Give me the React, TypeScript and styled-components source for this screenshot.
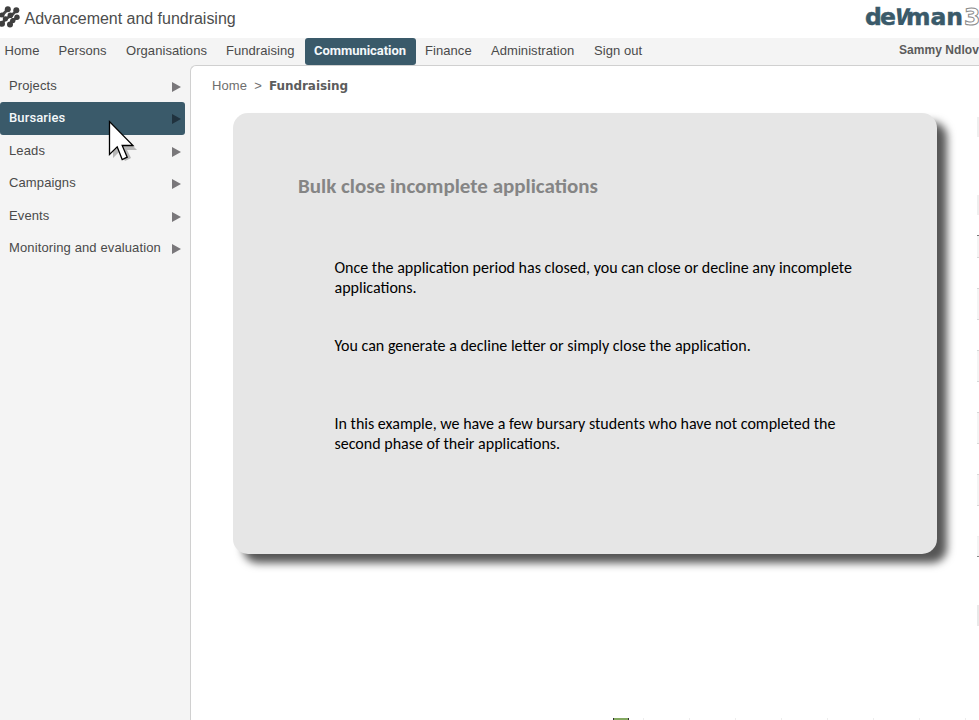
import React from "react";
import styled, { createGlobalStyle } from "styled-components";

const Global = createGlobalStyle`
  * { box-sizing: border-box; }
  html, body { margin: 0; height: 100%; overflow: hidden; background: #fff; }
`;

const TEAL = "#3a5a6a";

const Page = styled.div`
  display: flex;
  flex-direction: column;
  width: 979px;
  height: 720px;
  overflow: hidden;
  background: #f4f4f4;
  font-family: "Liberation Sans", Arial, sans-serif;
  font-size: 13px;
  color: #4a4a4a;
`;

const Header = styled.header`
  display: flex;
  align-items: flex-start;
  justify-content: space-between;
  flex: none;
  height: 38px;
  background: #fff;
`;

const Heading = styled.div`
  display: flex;
  align-items: flex-start;
`;

const Mark = styled.svg`
  flex: none;
  width: 20px;
  height: 22px;
  margin: 6px 4.5px 0 0;
`;

const Title = styled.h1`
  margin: 9px 0 0;
  font-size: 16px;
  line-height: 19px;
  font-weight: 400;
  letter-spacing: -0.02px;
  color: #4d4d4d;
`;

const Brand = styled.div`
  display: flex;
  align-items: baseline;
  width: 114px;
  padding-top: 2px;
  overflow: hidden;
  white-space: nowrap;
  font-family: "DejaVu Sans", Verdana, sans-serif;
  font-weight: 700;
  font-size: 23.5px;
  line-height: 28px;
  color: ${TEAL};
`;

const BrandPart = styled.span<{ $spacing: number }>`
  letter-spacing: ${(p) => p.$spacing}px;
  -webkit-text-stroke: 0.5px ${TEAL};
`;

const BrandSlant = styled.span`
  width: 12px;
  font-family: "Open Sans", "Noto Sans", sans-serif;
  font-weight: 800;
  font-size: 23.5px;
  transform: skewX(-10deg) scaleX(0.86);
  transform-origin: 20% 70%;
`;

const BrandOutline = styled.span`
  margin-left: 1px;
  color: #fff;
  -webkit-text-stroke: 1px #8a8a8a;
`;

const Nav = styled.nav`
  display: flex;
  flex: none;
  height: 27px;
  padding-left: 4.5px;
`;

const NavItem = styled.a<{ $width: number; $active?: boolean }>`
  flex: none;
  width: ${(p) => p.$width}px;
  padding-left: ${(p) => (p.$active ? 9 : 0)}px;
  margin-right: ${(p) => (p.$active ? 9 : 0)}px;
  line-height: 25px;
  letter-spacing: ${(p) => (p.$active ? -0.04 : 0.06)}px;
  white-space: nowrap;
  border-radius: 3px;
  background: ${(p) => (p.$active ? TEAL : "transparent")};
  color: ${(p) => (p.$active ? "#f4f8fa" : "inherit")};
  font-weight: ${(p) => (p.$active ? 700 : 400)};
  font-family: ${(p) => (p.$active ? "Roboto, sans-serif" : "inherit")};
`;

const User = styled.span`
  flex: none;
  width: 80px;
  margin-left: auto;
  overflow: hidden;
  line-height: 24px;
  font-size: 12px;
  font-weight: 700;
  letter-spacing: 0.05px;
  color: #5b5b5b;
  white-space: nowrap;
`;

const Body = styled.div`
  display: flex;
  flex: 1;
  min-height: 0;
`;

const Sidebar = styled.aside`
  flex: none;
  width: 190px;
  padding-top: 4.5px;
`;

const SideItem = styled.a<{ $active?: boolean }>`
  display: flex;
  align-items: center;
  justify-content: space-between;
  width: 185px;
  height: 32.5px;
  padding: 0 4px 1px 9px;
  border-radius: 3px;
  letter-spacing: 0.12px;
  background: ${(p) => (p.$active ? TEAL : "transparent")};
  color: ${(p) => (p.$active ? "#f4f8fa" : "inherit")};
  font-family: ${(p) => (p.$active ? "Roboto, sans-serif" : "inherit")};
  font-weight: ${(p) => (p.$active ? 500 : 400)};
`;

const Arrow = styled.svg<{ $active?: boolean }>`
  width: 9px;
  height: 10px;
  margin-top: 3px;
  fill: ${(p) => (p.$active ? "#20323e" : "#79777a")};
`;

const Content = styled.main`
  display: flex;
  flex: 1;
  min-width: 0;
  background: #fff;
  border: solid #d0d0d0;
  border-width: 1px 0 0 1px;
  border-top-left-radius: 6px;
`;

const Column = styled.div`
  display: flex;
  flex-direction: column;
  flex: 1;
  min-width: 0;
`;

const Crumbs = styled.div`
  display: flex;
  gap: 7px;
  height: 47px;
  padding: 12px 0 0 21px;
  line-height: 16px;
  letter-spacing: 0.12px;
  color: #6e6e6e;
`;

const Current = styled.b`
  font-family: "DejaVu Sans", Verdana, sans-serif;
  font-size: 12px;
  letter-spacing: -0.05px;
  color: #5c5c5c;
`;

const Card = styled.section`
  flex: none;
  width: 704px;
  height: 441px;
  margin-left: 42px;
  padding: 60px 64px 0 65px;
  border-radius: 15px;
  background: #e6e6e6;
  box-shadow: 10px 9px 8px #565656;
  font-family: Carlito, Calibri, Lato, sans-serif;
  color: #000;
`;

const CardTitle = styled.h2`
  margin: 0 0 59px;
  font-size: 21px;
  line-height: 26px;
  font-weight: 700;
  color: #858585;
`;

const Paragraph = styled.p<{ $gap: number }>`
  margin: 0 -20px ${(p) => p.$gap}px 36.5px;
  font-size: 16px;
  line-height: 20px;
  white-space: nowrap;
`;

const Tools = styled.div`
  display: flex;
  align-items: flex-end;
  gap: 45px;
  height: 2px;
  margin: auto 0 0 422px;
`;

const GreenTool = styled.i`
  flex: none;
  width: 16px;
  height: 2px;
  margin-right: -31px;
  border: solid #333;
  border-width: 0 1px;
  background: #83a860;
`;

const FaintTool = styled.i`
  flex: none;
  width: 1px;
  height: 2px;
  background: #ededed;
`;

const Edge = styled.div`
  display: flex;
  flex-direction: column;
  flex: none;
  width: 2px;
`;

const EdgeField = styled.i<{ $before: number; $height: number; $fill?: string; $top?: string; $bottom?: string }>`
  flex: none;
  height: ${(p) => p.$height}px;
  margin-top: ${(p) => p.$before}px;
  background: ${(p) => p.$fill ?? "#f4f4f4"};
  border: solid transparent;
  border-width: 1px 0;
  border-top-color: ${(p) => p.$top ?? "#d8d8d8"};
  border-bottom-color: ${(p) => p.$bottom ?? "#d8d8d8"};
`;

const Pointer = styled.svg`
  position: absolute;
  left: 107px;
  top: 119px;
  width: 34px;
  height: 46px;
`;

const navItems: { label: string; width: number; active?: boolean }[] = [
  { label: "Home", width: 54 },
  { label: "Persons", width: 67.5 },
  { label: "Organisations", width: 100 },
  { label: "Fundraising", width: 79 },
  { label: "Communication", width: 111, active: true },
  { label: "Finance", width: 66 },
  { label: "Administration", width: 103 },
  { label: "Sign out", width: 60 },
];

const sideItems = ["Projects", "Bursaries", "Leads", "Campaigns", "Events", "Monitoring and evaluation"];

export default function App() {
  return (
    <Page>
      <Global />
      <Header>
        <Heading>
          <Mark viewBox="0 0 20 22">
            <g stroke="#484848" strokeWidth="2.8" fill="none">
              <path d="M-1 10 L2 9.5 L7.5 3.5" />
              <path d="M1.5 18 L5.5 13 L11.5 9.5 L17 4" />
              <path d="M10 18.5 L12 14.5 L17.5 11.5" />
            </g>
            <g fill="#3f3f3f">
              <circle cx="7.8" cy="3.3" r="3" />
              <circle cx="16.3" cy="4.3" r="3" />
              <circle cx="2" cy="9" r="2.5" />
              <circle cx="10.4" cy="9.3" r="2.8" />
              <circle cx="17" cy="11.3" r="2.7" />
              <circle cx="5.4" cy="12.8" r="2.6" />
              <circle cx="12.8" cy="14.6" r="2.6" />
              <circle cx="2" cy="17.7" r="3" />
              <circle cx="10" cy="18.6" r="3" />
            </g>
          </Mark>
          <Title>Advancement and fundraising</Title>
        </Heading>
        <Brand>
          <BrandPart $spacing={-1.9}>de</BrandPart>
          <BrandSlant>V</BrandSlant>
          <BrandPart $spacing={0}>man</BrandPart>
          <BrandOutline>3</BrandOutline>
        </Brand>
      </Header>
      <Nav>
        {navItems.map((n) => (
          <NavItem key={n.label} $width={n.width} $active={n.active}>
            {n.label}
          </NavItem>
        ))}
        <User>Sammy Ndlovu</User>
      </Nav>
      <Body>
        <Sidebar>
          {sideItems.map((label) => {
            const active = label === "Bursaries";
            return (
              <SideItem key={label} $active={active}>
                {label}
                <Arrow $active={active} viewBox="0 0 9 10">
                  <path d="M0 0 L9 5 L0 10Z" />
                </Arrow>
              </SideItem>
            );
          })}
        </Sidebar>
        <Content>
          <Column>
            <Crumbs>
              <span>Home</span>
              <span>&gt;</span>
              <Current>Fundraising</Current>
            </Crumbs>
            <Card>
              <CardTitle>Bulk close incomplete applications</CardTitle>
              <Paragraph $gap={38}>
                Once the application period has closed, you can close or decline any incomplete
                <br />
                applications.
              </Paragraph>
              <Paragraph $gap={58}>You can generate a decline letter or simply close the application.</Paragraph>
              <Paragraph $gap={0}>
                In this example, we have a few bursary students who have not completed the
                <br />
                second phase of their applications.
              </Paragraph>
            </Card>
            <Tools>
              <GreenTool />
              {[0, 1, 2, 3, 4, 5, 6, 7].map((k) => (
                <FaintTool key={k} />
              ))}
            </Tools>
          </Column>
          <Edge>
            <EdgeField $before={51} $height={20} $fill="#efefef" $top="#efefef" $bottom="#efefef" />
            <EdgeField $before={58} $height={20} $fill="#efefef" $top="#efefef" $bottom="#efefef" />
            <EdgeField $before={20} $height={23} $top="#777" />
            <EdgeField $before={30} $height={32} />
            <EdgeField $before={30} $height={32} />
            <EdgeField $before={30} $height={32} />
            <EdgeField $before={30} $height={32} />
            <EdgeField $before={30} $height={21} $top="#f0f0f0" $bottom="#888" />
            <EdgeField $before={48} $height={21} $fill="#e9e9e9" $top="#e9e9e9" $bottom="#e9e9e9" />
          </Edge>
        </Content>
      </Body>
      <Pointer viewBox="0 0 34 46">
        <path d="M6 7 V39 L13 32 L18 42 L24 39 L20 31 H30Z" fill="#000" opacity=".25" />
        <path
          d="M2.5 2.5 V35.5 L10.2 27.8 L15.2 40.5 L20.2 38.2 L15.2 26.5 H26Z"
          fill="#fff"
          stroke="#000"
          strokeWidth="1.3"
        />
      </Pointer>
    </Page>
  );
}
